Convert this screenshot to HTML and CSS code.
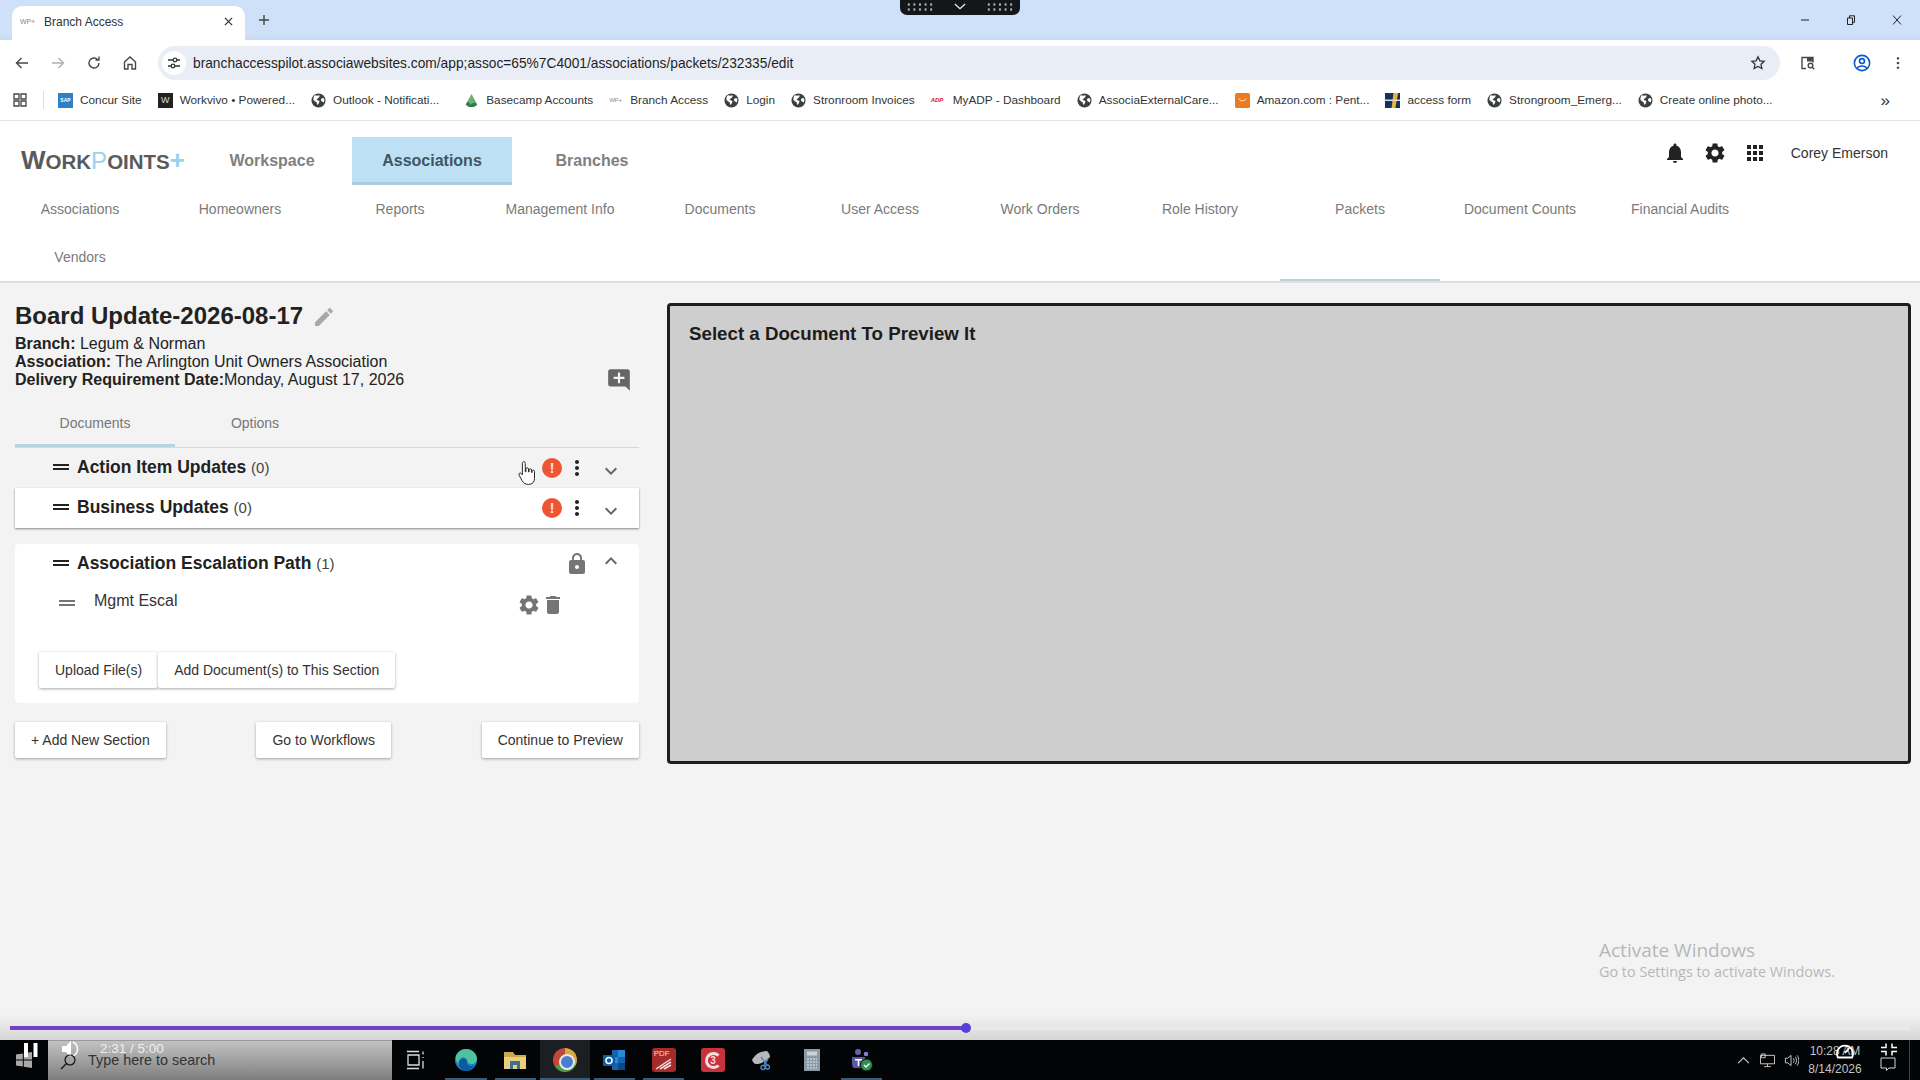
FILE: index.html
```html
<!DOCTYPE html>
<html lang="en">
<head>
    <meta charset="UTF-8">
    <title>Branch Access</title>
    <link rel="stylesheet" href="styles.css">
</head>
<body>
    <svg class="sprite" xmlns="http://www.w3.org/2000/svg">
        <symbol id="i-bell" viewBox="0 0 24 24"><path d="M12 22c1.1 0 2-.9 2-2h-4c0 1.1.89 2 2 2zm6-6v-5c0-3.07-1.64-5.64-4.5-6.32V4c0-.83-.67-1.5-1.5-1.5s-1.5.67-1.5 1.5v.68C7.63 5.36 6 7.92 6 11v5l-2 2v1h16v-1l-2-2z"/></symbol>
        <symbol id="i-gear" viewBox="0 0 24 24"><path d="M19.14 12.94c.04-.3.06-.61.06-.94 0-.32-.02-.64-.07-.94l2.03-1.58c.18-.14.23-.41.12-.61l-1.92-3.32c-.12-.22-.37-.29-.59-.22l-2.39.96c-.5-.38-1.03-.7-1.62-.94l-.36-2.54c-.04-.24-.24-.41-.48-.41h-3.84c-.24 0-.43.17-.47.41l-.36 2.54c-.59.24-1.13.57-1.62.94l-2.39-.96c-.22-.08-.47 0-.59.22L2.74 8.87c-.12.21-.08.47.12.61l2.03 1.58c-.05.3-.09.63-.09.94s.02.64.07.94l-2.03 1.58c-.18.14-.23.41-.12.61l1.92 3.32c.12.22.37.29.59.22l2.39-.96c.5.38 1.03.7 1.62.94l.36 2.54c.05.24.24.41.48.41h3.84c.24 0 .44-.17.47-.41l.36-2.54c.59-.24 1.13-.56 1.62-.94l2.39.96c.22.08.47 0 .59-.22l1.92-3.32c.12-.22.07-.47-.12-.61l-2.01-1.58zM12 15.6c-1.98 0-3.6-1.62-3.6-3.6s1.62-3.6 3.6-3.6 3.6 1.62 3.6 3.6-1.62 3.6-3.6 3.6z"/></symbol>
        <symbol id="i-apps" viewBox="0 0 24 24"><path d="M4 8h4V4H4v4zm6 12h4v-4h-4v4zm-6 0h4v-4H4v4zm0-6h4v-4H4v4zm6 0h4v-4h-4v4zm6-10v4h4V4h-4zm-6 4h4V4h-4v4zm6 6h4v-4h-4v4zm0 6h4v-4h-4v4z"/></symbol>
        <symbol id="i-edit" viewBox="0 0 24 24"><path d="M3 17.25V21h3.75L17.81 9.94l-3.75-3.75L3 17.25zM20.71 7.04c.39-.39.39-1.02 0-1.41l-2.34-2.34c-.39-.39-1.02-.39-1.41 0l-1.83 1.83 3.75 3.75 1.83-1.83z"/></symbol>
        <symbol id="i-comment" viewBox="0 0 24 24"><path d="M21.99 4c0-1.1-.89-2-1.99-2H4c-1.1 0-2 .9-2 2v12c0 1.1.9 2 2 2h14l4 4-.01-18zM17 11h-4v4h-2v-4H7V9h4V5h2v4h4v2z"/></symbol>
        <symbol id="i-drag" viewBox="0 0 24 24"><path d="M20 9H4v2h16V9zM4 15h16v-2H4v2z"/></symbol>
        <symbol id="i-more" viewBox="0 0 24 24"><path d="M12 8c1.1 0 2-.9 2-2s-.9-2-2-2-2 .9-2 2 .9 2 2 2zm0 2c-1.1 0-2 .9-2 2s.9 2 2 2 2-.9 2-2-.9-2-2-2zm0 6c-1.1 0-2 .9-2 2s.9 2 2 2 2-.9 2-2-.9-2-2-2z"/></symbol>
        <symbol id="i-down" viewBox="0 0 24 24"><path d="M16.59 8.59L12 13.17 7.41 8.59 6 10l6 6 6-6z"/></symbol>
        <symbol id="i-up" viewBox="0 0 24 24"><path d="M12 8l-6 6 1.41 1.41L12 10.83l4.59 4.58L18 14z"/></symbol>
        <symbol id="i-lock" viewBox="0 0 24 24"><path d="M18 8h-1V6c0-2.76-2.24-5-5-5S7 3.24 7 6v2H6c-1.1 0-2 .9-2 2v10c0 1.1.9 2 2 2h12c1.1 0 2-.9 2-2V10c0-1.1-.9-2-2-2zm-6 9c-1.1 0-2-.9-2-2s.9-2 2-2 2 .9 2 2-.9 2-2 2zm3.1-9H8.9V6c0-1.71 1.39-3.1 3.1-3.1 1.71 0 3.1 1.39 3.1 3.1v2z"/></symbol>
        <symbol id="i-trash" viewBox="0 0 24 24"><path d="M6 19c0 1.1.9 2 2 2h8c1.1 0 2-.9 2-2V7H6v12zM19 4h-3.5l-1-1h-5l-1 1H5v2h14V4z"/></symbol>
        <symbol id="i-globe" viewBox="0 0 16 16"><circle cx="8" cy="8" r="7.5" fill="#3c4043"/><path fill="#fff" d="M4.5 2.5c1.5.6 3 .3 4.5 0 .6 1 0 2-1 2.5-.5 1-1.500 1-2 2 .2 1 1.500.8 2.500 1.200.8.5.5 1.500 0 2.300-.4 1-.8 1.800-1.500 2.300-.6-1-.8-2-1-3-1.200-.5-2.600-1.500-3.500-3 0-1.800.6-3.200 1.500-4.300zM11 6c1-.5 2-.5 3-.2.400 1.500.200 3-.5 4.400-.8-.6-1.500-1.400-2.500-1.700-.5-.9-.5-1.700 0-2.500z"/></symbol>
    </svg>

    <!-- Browser -->
    <div class="tabstrip">
        <div class="tab">
            <span class="wp-fav">WP+</span>
            <span class="tab-title">Branch Access</span>
            <svg class="tab-close" viewBox="0 0 10 10"><path d="M1 1l8 8M9 1l-8 8"/></svg>
        </div>
        <svg class="tab-plus" viewBox="0 0 12 12"><path d="M6 1v10M1 6h10"/></svg>
        <div class="win-controls">
            <span class="win-btn"><svg viewBox="0 0 10 10"><path d="M1 5h8"/></svg></span>
            <span class="win-btn"><svg viewBox="0 0 10 10"><path d="M1.500 3h5v6.500h-5zM3.500 3V.8h5v6.500H6.500"/></svg></span>
            <span class="win-btn"><svg viewBox="0 0 10 10"><path d="M1 .5l8 9M9 .5l-8 9"/></svg></span>
        </div>
    </div>
    <div class="toolbar">
        <span class="tool-btn"><svg viewBox="0 0 16 16"><path d="M14 8H3M7.500 3L2.500 8l5 5"/></svg></span>
        <span class="tool-btn muted"><svg viewBox="0 0 16 16"><path d="M2 8h11M8.500 3l5 5-5 5"/></svg></span>
        <span class="tool-btn"><svg viewBox="0 0 16 16"><path d="M13 8a5 5 0 1 1-1.500-3.600M13 1.500v3.500H9.500"/></svg></span>
        <span class="tool-btn"><svg viewBox="0 0 16 16"><path d="M2.500 7L8 2l5.500 5v7H10V9.500H6V14H2.500z"/></svg></span>
        <div class="omnibox">
            <span class="site-info"><svg viewBox="0 0 14 14"><path d="M1 4h5M10 4h3M1 10h3M8 10h5"/><circle cx="8" cy="4" r="1.800"/><circle cx="6" cy="10" r="1.800"/></svg></span>
            <span class="url">branchaccesspilot.associawebsites.com/app;assoc=65%7C4001/associations/packets/232335/edit</span>
            <svg class="star" viewBox="0 0 16 16"><path d="M8 1.800l1.900 4 4.300.5-3.200 3 .9 4.300L8 11.500l-3.900 2.100.9-4.300-3.200-3 4.300-.5z"/></svg>
        </div>
        <span class="tool-btn wide"><svg viewBox="0 0 16 16"><path d="M6 13.500H2v-11h11v5"/><path class="solid" d="M7 2.500h6v4H7z"/><circle cx="10.500" cy="10.500" r="2.300"/><path d="M12.200 12.200l2 2"/></svg></span>
        <span class="tool-sep"></span>
        <span class="tool-btn"><svg class="blue" viewBox="0 0 16 16"><circle cx="8" cy="8" r="6.800"/><circle cx="8" cy="6.300" r="2.200"/><path d="M4 12.500c1-2.500 7-2.500 8 0"/></svg></span>
        <span class="tool-btn"><svg viewBox="0 0 16 16"><path class="solid" d="M8 2a1.300 1.300 0 1 0 .01 0zM8 6.700a1.300 1.300 0 1 0 .01 0zM8 11.400a1.300 1.300 0 1 0 .01 0z"/></svg></span>
    </div>
    <div class="bookmarks">
        <svg class="bm-grid" viewBox="0 0 14 14"><path d="M1 1h5v5H1zM8 1h5v5H8zM1 8h5v5H1zM8 8h5v5H8z"/></svg>
        <span class="bm-sep"></span>
        <span class="bm"><span class="fav fav-sap">SAP</span>Concur Site</span>
        <span class="bm"><span class="fav fav-vivo">W</span>Workvivo • Powered...</span>
        <span class="bm bm-wide"><svg class="fav"><use href="#i-globe"/></svg>Outlook - Notificati...</span>
        <span class="bm"><svg class="fav" viewBox="0 0 16 16"><path fill="#6fae7a" d="M8 1l6 11c-1 2-3 3-6 3s-5-1-6-3z"/><path fill="#2f7d4f" d="M2 12c2-3 3-3 4-1s2 1 3 0 3-1 5 1c-1 2-3 3-6 3s-5-1-6-3z"/></svg>Basecamp Accounts</span>
        <span class="bm"><span class="fav wp-fav">WP+</span>Branch Access</span>
        <span class="bm"><svg class="fav"><use href="#i-globe"/></svg>Login</span>
        <span class="bm"><svg class="fav"><use href="#i-globe"/></svg>Stronroom Invoices</span>
        <span class="bm"><span class="fav fav-adp">ADP</span>MyADP - Dashboard</span>
        <span class="bm"><svg class="fav"><use href="#i-globe"/></svg>AssociaExternalCare...</span>
        <span class="bm"><svg class="fav" viewBox="0 0 16 16"><rect width="16" height="16" rx="2" fill="#ee7a20"/><path d="M4 6c2 3 6 3 8 0" fill="none" stroke="#fff"/></svg>Amazon.com : Pent...</span>
        <span class="bm"><svg class="fav" viewBox="0 0 16 16"><path fill="#16305f" d="M0 0h16v16H0z"/><path fill="#f0b232" d="M9 0h5l-3 16H7z"/><path fill="#dfe6f2" d="M0 7h16v1.500H0z"/></svg>access form</span>
        <span class="bm"><svg class="fav"><use href="#i-globe"/></svg>Strongroom_Emerg...</span>
        <span class="bm"><svg class="fav"><use href="#i-globe"/></svg>Create online photo...</span>
        <span class="bm-more">»</span>
    </div>

    <!-- App -->
    <header class="app-header">
        <div class="top-row">
            <div class="logo">WORK<span class="blue">P</span>OINTS<span class="plus">+</span></div>
            <nav class="main-nav">
                <a>Workspace</a>
                <a class="active">Associations</a>
                <a>Branches</a>
            </nav>
            <div class="user-area">
                <svg class="icon"><use href="#i-bell"/></svg>
                <svg class="icon"><use href="#i-gear"/></svg>
                <svg class="icon"><use href="#i-apps"/></svg>
                <span class="user-name">Corey Emerson</span>
            </div>
        </div>
        <nav class="sub-nav">
            <a>Associations</a>
            <a>Homeowners</a>
            <a>Reports</a>
            <a>Management Info</a>
            <a>Documents</a>
            <a>User Access</a>
            <a>Work Orders</a>
            <a>Role History</a>
            <a class="active">Packets</a>
            <a>Document Counts</a>
            <a>Financial Audits</a>
            <a>Vendors</a>
        </nav>
    </header>

    <main class="content">
        <section class="packet">
            <h1 class="packet-title">Board Update-2026-08-17<svg class="icon edit"><use href="#i-edit"/></svg></h1>
            <div class="packet-info">
                <div>
                    <div><b>Branch:</b> Legum &amp; Norman</div>
                    <div><b>Association:</b> The Arlington Unit Owners Association</div>
                    <div><b>Delivery Requirement Date:</b>Monday, August 17, 2026</div>
                </div>
                <svg class="add-note"><use href="#i-comment"/></svg>
            </div>

            <div class="tabs">
                <a class="active">Documents</a>
                <a>Options</a>
            </div>

            <div class="sec-row">
                <svg class="icon"><use href="#i-drag"/></svg>
                <h2>Action Item Updates <small>(0)</small></h2>
                <div class="sec-tools">
                    <span class="alert">!</span>
                    <svg class="icon"><use href="#i-more"/></svg>
                    <svg class="icon chev"><use href="#i-down"/></svg>
                </div>
            </div>
            <div class="sec-row white">
                <svg class="icon"><use href="#i-drag"/></svg>
                <h2>Business Updates <small>(0)</small></h2>
                <div class="sec-tools">
                    <span class="alert">!</span>
                    <svg class="icon"><use href="#i-more"/></svg>
                    <svg class="icon chev"><use href="#i-down"/></svg>
                </div>
            </div>

            <div class="sec-card">
                <div class="sec-row">
                    <svg class="icon"><use href="#i-drag"/></svg>
                    <h2>Association Escalation Path <small>(1)</small></h2>
                    <div class="sec-tools">
                        <svg class="icon grey"><use href="#i-lock"/></svg>
                        <svg class="icon chev up"><use href="#i-up"/></svg>
                    </div>
                </div>
                <div class="doc-row">
                    <svg class="icon grey"><use href="#i-drag"/></svg>
                    <span class="doc-name">Mgmt Escal</span>
                    <div class="doc-tools">
                        <svg class="icon grey"><use href="#i-gear"/></svg>
                        <svg class="icon grey"><use href="#i-trash"/></svg>
                    </div>
                </div>
                <div class="card-btns">
                    <button>Upload File(s)</button>
                    <button>Add Document(s) to This Section</button>
                </div>
            </div>

            <div class="page-btns">
                <button>+ Add New Section</button>
                <button>Go to Workflows</button>
                <button>Continue to Preview</button>
            </div>

            <svg class="hand" viewBox="0 0 18 24"><path d="M5 1.500c1 0 1.500.7 1.500 1.600V11l.6-.1V8.400c0-1.600 2.400-1.600 2.400 0V11l.5 0V9.200c0-1.500 2.300-1.500 2.300 0v2.300l.5 0v-1c0-1.400 2.200-1.400 2.200 0V17c0 3.500-2 5.500-5.500 5.500-3 0-4.500-1-6-3.500L.8 14c-.9-1.500 1-2.700 2-1.500l1 1.300V3.100C3.800 2.200 4.200 1.500 5 1.500z"/></svg>
        </section>

        <section class="preview">
            <h3>Select a Document To Preview It</h3>
        </section>
    </main>

    <!-- Overlays from the recording -->
    <div class="rec-pill">
        <span class="dots"></span>
        <svg viewBox="0 0 14 8"><path d="M1 1l6 5.500L13 1"/></svg>
        <span class="dots"></span>
    </div>
    <div class="activate">
        <div class="activate-big">Activate Windows</div>
        <div>Go to Settings to activate Windows.</div>
    </div>
    <div class="player-fade">
        <div class="player-track"><div class="player-fill"></div></div>
    </div>

    <!-- Taskbar -->
    <footer class="taskbar">
        <div class="start">
            <svg viewBox="0 0 16 16"><path d="M0 2.500l6.800-1v6H0zM7.800 1.300L16 0v7.500H7.800zM0 8.500h6.800v6l-6.800-1zM7.800 8.500H16V16l-8.200-1.300z"/></svg>
        </div>
        <div class="search">Type here to search</div>
        <div class="task-icons">
            <span class="task first"><svg viewBox="0 0 24 24" fill="none" stroke="#ddd" stroke-width="1.300"><path d="M5 7h11v10H5zM4 3.500h12M4 20.500h12M20 3.500v3M20 9v1M20 13v7.500"/></svg></span>
            <span class="task open"><svg viewBox="0 0 24 24"><circle cx="12" cy="12" r="11" fill="#1680c8"/><path fill="#4fc3a0" d="M12 1c6 0 11 4.500 11 10 0 3-2.500 5-6 5-2 0-3.500-1-3.500-2.500 0-2-3-5-6-3.500C5 11.500 4 14 5 17 2.500 14 1 11 2 8c1.500-4 5.500-7 10-7z"/><path fill="#0d5a9e" d="M5 17c-1-4 2-7 5-6.500 2.500.5 3.500 3.500 3 5 1 3 4.500 3 7 2-2 3.500-5 5.500-8 5.500-3 0-6-2-7-6z"/></svg></span>
            <span class="task open"><svg viewBox="0 0 24 24"><path fill="#c9a84e" d="M1 4h9l2 3h11v14H1z"/><path fill="#e9cf7c" d="M1 9h22v12H1z"/><path fill="#3f6f92" d="M7 13h10v8h-3v-4h-4v4H7z"/></svg></span>
            <span class="task open current"><span class="chrome"></span></span>
            <span class="task open"><svg viewBox="0 0 24 24"><path fill="#1464b4" d="M10 2h13v20H10z"/><path fill="#2a8ad4" d="M16 2h7v7h-7zM10 9h6v6h-6z"/><path fill="#0a4a8a" d="M16 15h7v7h-7z"/><rect x="1" y="7" width="12" height="11" fill="#0d5ca8"/><circle cx="7" cy="12.500" r="3" fill="none" stroke="#fff" stroke-width="1.600"/></svg></span>
            <span class="task open"><span class="pdf">PDF<svg viewBox="0 0 20 12"><path d="M2 11L17 1M6 11l11-7M10 11l7-4" fill="none" stroke="#f5dcdc" stroke-width="1.500"/></svg></span></span>
            <span class="task"><span class="cthree"><span class="cring">3</span></span></span>
            <span class="task"><svg viewBox="0 0 24 24"><path fill="#b8b8b8" d="M2 12C5 6 11 3 17 3c2 2 3 4 3 6-4 4-9 7-14 7-2 0-3-2-4-4z"/><path fill="none" stroke="#4a8ac4" stroke-width="1.400" d="M11 9l6 8M18 11l-4 6"/><circle cx="17.500" cy="19" r="2" fill="none" stroke="#4a8ac4" stroke-width="1.400"/><circle cx="13" cy="19.500" r="2" fill="none" stroke="#4a8ac4" stroke-width="1.400"/></svg></span>
            <span class="task"><svg viewBox="0 0 24 24"><rect x="4" y="1" width="16" height="22" fill="#8a9ba6"/><rect x="7" y="3.500" width="10" height="4" fill="#c8d4da"/><path stroke="#c8d4da" stroke-width="1.600" stroke-dasharray="2 1" d="M7 11h10M7 14h10M7 17h10M7 20h10"/></svg></span>
            <span class="task open"><svg viewBox="0 0 24 24"><circle cx="9" cy="4" r="3" fill="#6264a7"/><circle cx="17" cy="6" r="2.300" fill="#7b83c9"/><path fill="#5558a8" d="M3 9h13v11H5c-1 0-2-2-2-4z"/><path fill="#fff" d="M6 11h7v1.500h-2.700V18H8.700v-5.500H6z"/><circle cx="17.500" cy="17" r="6" fill="#2d8f4e" stroke="#111"/><path fill="none" stroke="#fff" stroke-width="1.400" d="M15 17l2 2 3.500-3.500"/></svg></span>
        </div>
        <div class="tray">
            <span class="tray-slot"><svg viewBox="0 0 14 14"><path d="M2 9.500l5-5 5 5"/></svg></span>
            <span class="tray-slot"><svg viewBox="0 0 16 16"><path d="M.5 2.500h15v9H.5zM8 11.500v3M4.500 14.500h7M1.500 1h4v4h-4z"/></svg></span>
            <span class="tray-slot"><svg viewBox="0 0 16 16"><path d="M1.500 5.500H4L7.500 2.500v11L4 10.500H1.500zM10 5.500c1 1.500 1 3.500 0 5M12 4c1.800 2.500 1.800 5.500 0 8M14 2.500c2.400 3.500 2.400 7.500 0 11"/></svg></span>
            <div class="clock"><div>10:28 AM</div><div>8/14/2026</div></div>
            <span class="tray-note"><svg viewBox="0 0 16 16"><path d="M1 2h14v10H9l-2.500 2.500V12H1z"/></svg></span>
            <span class="show-desktop"></span>
        </div>
        <div class="player-left">
            <svg class="pause" viewBox="0 0 14 14"><path d="M0 0h4v14H0zM9.500 0h4v14h-4z"/></svg>
            <svg class="volume" viewBox="0 0 18 16"><path d="M0 5h4l5-5v16l-5-5H0z"/><path fill="none" stroke="#fff" stroke-width="1.500" d="M11 1c6 3 6 11 0 14"/></svg>
            <svg class="loupe" viewBox="0 0 16 16"><circle cx="10" cy="6" r="5"/><path d="M6.500 9.500L1 15"/></svg>
            <span class="player-time">2:31 / 5:00</span>
        </div>
        <svg class="gauge" viewBox="0 0 20 16"><path d="M3 14.500a8 8 0 1 1 14 0zM10 10l5-6"/></svg>
        <svg class="fs-exit" viewBox="0 0 16 12"><path d="M5 0v4H0M11 0v4h5M0 8h5v4M16 8h-5v4"/></svg>
    </footer>
</body>
</html>
```

FILE: styles.css
```css
/* General */
* {
    box-sizing: border-box;
}

html, body {
    margin: 0;
    height: 1080px;
    overflow: hidden;
}

body {
    position: relative;
    display: flex;
    flex-direction: column;
    font-family: "Liberation Sans", Arial, sans-serif;
    font-size: 14px;
    color: #222;
    background-color: #f3f3f3;
}

.sprite {
    display: none;
}

.icon {
    display: block;
    flex: none;
    width: 24px;
    height: 24px;
    fill: currentColor;
}

.grey {
    color: #757575;
}

/* Browser tabs */
.tabstrip {
    display: flex;
    align-items: flex-end;
    height: 40px;
    padding-left: 12px;
    background: linear-gradient(#cfe0f9 80%, #c9daf3);
}

.tab {
    display: flex;
    align-items: center;
    width: 233px;
    height: 34px;
    padding: 0 10px 3px 8px;
    background: #fff;
    border-radius: 10px 10px 0 0;
    font-size: 12px;
    color: #333;
}

.wp-fav {
    flex: none;
    width: 24px;
    font-size: 7px;
    letter-spacing: -.2px;
    color: #8a8a8a;
}

.tab-title {
    flex: 1;
}

.tab-close {
    width: 9px;
    height: 9px;
    margin-right: 2px;
    stroke: #333;
    stroke-width: 1.4;
}

.tab-plus {
    width: 12px;
    height: 12px;
    margin: 0 0 14px 13px;
    stroke: #444;
    stroke-width: 1.400;
}

.win-controls {
    display: flex;
    margin-left: auto;
    align-self: stretch;
}

.win-btn {
    display: flex;
    align-items: center;
    justify-content: center;
    width: 46px;
}

.win-btn svg {
    width: 10px;
    height: 10px;
    fill: none;
    stroke: #222;
}

/* Browser toolbar */
.toolbar {
    display: flex;
    align-items: center;
    height: 40px;
    padding: 6px 4px 0;
    background: #fff;
}

.tool-btn {
    display: flex;
    align-items: center;
    justify-content: center;
    flex: none;
    width: 36px;
    height: 32px;
}

.tool-btn svg {
    width: 16px;
    height: 16px;
    fill: none;
    stroke: #474747;
    stroke-width: 1.400;
}

.tool-btn.muted svg {
    stroke: #b0b0b0;
}

.tool-btn svg.blue {
    stroke: #0b57d0;
    width: 18px;
    height: 18px;
}

.tool-btn .solid {
    fill: #474747;
    stroke: none;
}

.tool-btn.wide {
    width: 56px;
}

.tool-sep {
    width: 1px;
    height: 20px;
    margin: 0 8px 0 0;
    background: #dcdcdc;
}

.omnibox {
    display: flex;
    align-items: center;
    flex: none;
    width: 1622px;
    height: 34px;
    margin-left: 10px;
    padding: 0 14px 0 4px;
    background: #e9eef6;
    border-radius: 17px;
    font-size: 13.750px;
    color: #1f1f1f;
}

.site-info {
    display: flex;
    align-items: center;
    justify-content: center;
    width: 24px;
    height: 24px;
    background: #fff;
    border-radius: 50%;
}

.site-info svg {
    width: 14px;
    height: 14px;
    fill: none;
    stroke: #333;
    stroke-width: 1.300;
}

.url {
    flex: 1;
    margin-left: 7px;
}

.star {
    width: 16px;
    height: 16px;
    fill: none;
    stroke: #333;
    stroke-width: 1.300;
}

/* Bookmarks */
.bookmarks {
    display: flex;
    align-items: center;
    height: 40px;
    padding-left: 13px;
    background: #fff;
    font-size: 11.800px;
    color: #333;
    white-space: nowrap;
}

.bm-grid {
    width: 14px;
    height: 14px;
    fill: none;
    stroke: #444;
    stroke-width: 1.300;
}

.bm-sep {
    width: 1px;
    height: 18px;
    margin: 0 14px 0 16px;
    background: #ddd;
}

.bm {
    display: flex;
    align-items: center;
    margin-right: 16px;
}

.bm-wide {
    margin-right: 25px;
}

.fav {
    flex: none;
    width: 15px;
    height: 15px;
    margin-right: 7px;
}

.fav.wp-fav {
    width: 15px;
    margin-right: 6px;
    font-size: 6px;
    line-height: 15px;
}

.fav-sap {
    background: #2f7fc4;
    color: #fff;
    font-size: 5px;
    font-weight: bold;
    line-height: 15px;
    text-align: center;
}

.fav-vivo {
    background: #222;
    color: #ddd;
    font-size: 9px;
    line-height: 15px;
    text-align: center;
}

.fav-adp {
    color: #d0202e;
    font-size: 6px;
    font-weight: bold;
    font-style: italic;
    line-height: 15px;
}

.bm-more {
    margin-left: auto;
    margin-right: 30px;
    font-size: 17px;
    line-height: 1;
}

/* App header */
.app-header {
    background: #fff;
    border-top: 1px solid #e3e3e3;
    border-bottom: 2px solid #dfdfdf;
}

.top-row {
    display: flex;
    height: 64px;
}

.logo {
    flex: none;
    width: 192px;
    padding: 24px 0 0 21px;
    font-size: 20.500px;
    font-weight: bold;
    line-height: 30px;
    color: #5a5a5a;
    white-space: nowrap;
}

.logo::first-letter {
    font-size: 26px;
}

.logo .blue {
    font-size: 24px;
    font-weight: normal;
    color: #9dd0ee;
}

.logo .plus {
    font-size: 26px;
    color: #9dd0ee;
}

.main-nav {
    display: flex;
    align-items: flex-end;
}

.main-nav a {
    display: flex;
    align-items: center;
    justify-content: center;
    width: 160px;
    height: 48px;
    font-size: 16px;
    font-weight: bold;
    color: #808080;
}

.main-nav a.active {
    padding-top: 3px;
    background: #bee0f4;
    border-bottom: 3px solid #a8cde3;
    color: #3d5663;
}

.user-area {
    display: flex;
    align-items: center;
    gap: 16px;
    margin-left: auto;
    padding: 0 32px 0 0;
    color: #222;
}

.user-name {
    margin-left: 8px;
    color: #333;
}

.sub-nav {
    display: grid;
    grid-template-columns: repeat(11, 160px);
    grid-auto-rows: 48px;
}

.sub-nav a {
    display: flex;
    align-items: center;
    justify-content: center;
    color: #7a7a7a;
}

/* the underline of the open page sits on the bottom edge of the header */
.sub-nav a.active {
    grid-row: span 2;
    align-items: flex-start;
    padding-top: 16px;
    box-shadow: inset 0 -2px 0 #bcd3da;
}

/* Content */
.content {
    display: flex;
    flex: 1;
    align-items: flex-start;
    gap: 28px;
    padding: 20px 9px 0 15px;
}

.packet {
    position: relative;
    flex: none;
    width: 624px;
}

.packet-title {
    display: flex;
    align-items: center;
    gap: 1px;
    height: 28px;
    margin: -1px 0 5px;
    font-size: 24px;
    font-weight: bold;
    white-space: pre;
}

.packet-title .edit {
    margin: 1px 0 0 8px;
    color: #a8a8a8;
}

.packet-info {
    display: flex;
    justify-content: space-between;
    align-items: flex-end;
    padding-right: 7px;
    font-size: 16px;
    line-height: 18.200px;
}

.add-note {
    width: 26px;
    height: 26px;
    fill: #666;
    margin-bottom: -3px;
}

.tabs {
    display: flex;
    height: 58px;
    padding-top: 9px;
    border-bottom: 1px solid #d8d8d8;
}

.tabs a {
    display: flex;
    align-items: center;
    justify-content: center;
    width: 160px;
    height: 48px;
    margin-bottom: -1px;
    color: #777;
}

.tabs a.active {
    padding-top: 3px;
    border-bottom: 3px solid #b7d5e0;
}

/* Sections */
.sec-row {
    display: flex;
    align-items: center;
    height: 40px;
    padding: 0 16px 0 34px;
}

.sec-row > .icon {
    margin-bottom: 1px;
}

.sec-row h2 {
    margin: 0 0 1px 4px;
    font-size: 17.500px;
    font-weight: bold;
}

.sec-row h2 small {
    font-size: 15px;
    font-weight: normal;
    color: #444;
}

.sec-row.white {
    background: #fff;
    box-shadow: 0 1px 2px rgba(0, 0, 0, .45);
}

.sec-tools {
    display: flex;
    align-items: center;
    gap: 2px;
    margin-left: auto;
}

.alert {
    width: 20px;
    height: 20px;
    margin: 0 1px 0 0;
    border-radius: 50%;
    background: #ee5533;
    color: #fbe6df;
    font-size: 14px;
    font-weight: bold;
    line-height: 20px;
    text-align: center;
}

.chev {
    margin: 6px 0 0 8px;
    color: #666;
}

.chev.up {
    margin-top: -6px;
}

.sec-card {
    margin-top: 16px;
    padding-bottom: 15px;
    background: #fff;
    border-radius: 4px;
}

.doc-row {
    display: flex;
    align-items: flex-start;
    height: 68px;
    padding: 8px 0 0 40px;
}

.doc-row > .icon {
    margin-top: -1px;
}

.doc-name {
    font-size: 16px;
    margin-left: 15px;
    color: #333;
}

.doc-tools {
    display: flex;
    margin: 1px 0 0 auto;
    padding-right: 74px;
}

button {
    height: 36px;
    padding: 0 16px;
    border: none;
    border-radius: 2px;
    background: #fff;
    box-shadow: 0 1px 3px rgba(0, 0, 0, .35);
    font-family: inherit;
    font-size: 14px;
    color: #333;
}

.card-btns {
    display: flex;
    padding-left: 24px;
}

.page-btns {
    display: flex;
    justify-content: space-between;
    margin-top: 19px;
}

.hand {
    position: absolute;
    left: 503px;
    top: 157px;
    width: 20px;
    height: 26px;
    fill: #fff;
    stroke: #222;
    stroke-width: .9;
}

/* Preview */
.preview {
    flex: 1;
    height: 461px;
    padding: 17px 19px;
    background: #cecece;
    border: 3px solid #1e1e1e;
    border-radius: 4px;
}

.preview h3 {
    margin: 0;
    font-size: 18.720px;
    color: #1c1c1c;
}

/* Recording overlays */
.rec-pill {
    position: absolute;
    top: 0;
    left: 900px;
    display: flex;
    align-items: center;
    justify-content: space-between;
    width: 120px;
    height: 15px;
    padding: 0 6px 2px;
    background: #14171a;
    border-radius: 0 0 7px 7px;
}

.rec-pill svg {
    width: 12px;
    height: 7px;
    fill: none;
    stroke: #eee;
    stroke-width: 1.500;
}

.dots {
    width: 28px;
    height: 10px;
    background: radial-gradient(circle, #b5b5b5 1px, transparent 1.300px) 0 0 / 5.600px 5px;
}

.activate {
    position: absolute;
    left: 1599px;
    top: 938px;
    font-family: "Open Sans", sans-serif;
    font-size: 14.400px;
    line-height: 20px;
    color: #b7b7b7;
}

.activate-big {
    font-size: 19px;
    line-height: 24px;
}

.player-fade {
    position: absolute;
    left: 0;
    right: 0;
    bottom: 40px;
    height: 26px;
    padding: 12px 10px 0;
    background: linear-gradient(rgba(215, 215, 215, 0), #d6d6d6);
}

.player-track {
    height: 4px;
    background: #e9e9e9;
}

.player-fill {
    position: relative;
    width: 956px;
    height: 4px;
    background: #6f42c4;
}

.player-fill::after {
    content: "";
    position: absolute;
    right: -5px;
    top: -3px;
    width: 10px;
    height: 10px;
    border-radius: 50%;
    background: #5a3fd6;
}

/* Taskbar */
.taskbar {
    position: relative;
    display: flex;
    flex: none;
    height: 40px;
    background: #030405;
}

.start {
    display: flex;
    align-items: flex-end;
    flex: none;
    width: 48px;
    padding: 0 0 12px 16px;
}

.start svg {
    width: 16px;
    height: 16px;
    fill: #a9a9a9;
}

.search {
    flex: none;
    width: 344px;
    padding: 11px 0 0 40px;
    background: linear-gradient(#c2c2c2, #7e7e7e);
    border-top: 1px solid #999;
    font-size: 14.400px;
    color: #333;
}

.task-icons {
    display: flex;
}

.task {
    position: relative;
    display: flex;
    align-items: center;
    justify-content: center;
    width: 49.400px;
}

.task svg {
    width: 24px;
    height: 24px;
}

.task.first svg {
    margin-right: 3px;
}

.task.open::after {
    content: "";
    position: absolute;
    left: 4px;
    right: 4px;
    bottom: 0;
    height: 2px;
    background: #3b5a78;
}

.task.current {
    background: #1c1f21;
}

.task.current::after {
    left: 0;
    right: 0;
}

.chrome {
    position: relative;
    width: 24px;
    height: 24px;
    border-radius: 50%;
    background: conic-gradient(#d9a93c 0 115deg, #4f9a4a 115deg 235deg, #c0483a 235deg 360deg);
}

.chrome::after {
    content: "";
    position: absolute;
    left: 6px;
    top: 6px;
    width: 12px;
    height: 12px;
    border-radius: 50%;
    background: #4a7fd0;
    border: 2px solid #e8e8e8;
}

.pdf {
    width: 24px;
    height: 24px;
    padding: 2px 0 0 2px;
    background: #a52a2a;
    border-radius: 3px;
    font-size: 8px;
    line-height: 8px;
    color: #f0d8d8;
}

.pdf svg {
    display: block;
    width: 20px;
    height: 12px;
}

.cthree {
    display: flex;
    align-items: center;
    justify-content: center;
    width: 24px;
    height: 24px;
    background: #c8323c;
    border-radius: 3px;
}

.cring {
    width: 17px;
    height: 17px;
    border: 3px solid #f2dcdc;
    border-right-color: transparent;
    border-radius: 50%;
    font-size: 10px;
    font-weight: bold;
    line-height: 11px;
    text-align: center;
    color: #f2dcdc;
}

.tray {
    display: flex;
    align-items: center;
    margin-left: auto;
}

.tray-slot {
    display: flex;
    justify-content: center;
    width: 24px;
}

.tray-slot svg {
    width: 15px;
    height: 15px;
    fill: none;
    stroke: #cfcfcf;
}

.clock {
    width: 64px;
    font-size: 12px;
    line-height: 18px;
    text-align: center;
    color: #c4c4c4;
}

.tray-note {
    display: flex;
    justify-content: center;
    width: 42px;
    padding-top: 8px;
}

.tray-note svg {
    width: 16px;
    height: 16px;
    fill: none;
    stroke: #d5d5d5;
}

.show-desktop {
    width: 11px;
    height: 40px;
    border-left: 1px solid #444;
    margin-left: 0;
}

.player-left {
    position: absolute;
    left: 0;
    top: 0;
}

.pause {
    position: absolute;
    left: 24px;
    top: 3px;
    width: 14px;
    height: 14px;
    fill: #fff;
}

.volume {
    position: absolute;
    left: 62px;
    top: 1px;
    width: 18px;
    height: 16px;
    fill: #fff;
}

.loupe {
    position: absolute;
    left: 60px;
    top: 14px;
    width: 16px;
    height: 16px;
    fill: none;
    stroke: #111;
    stroke-width: 1.200;
}

.player-time {
    position: absolute;
    left: 100px;
    top: 1px;
    font-size: 13.500px;
    line-height: 15px;
    color: #eee;
    white-space: nowrap;
}

.gauge {
    position: absolute;
    left: 1835px;
    top: 3px;
    width: 20px;
    height: 16px;
    fill: none;
    stroke: #fff;
    stroke-width: 1.800;
}

.fs-exit {
    position: absolute;
    left: 1881px;
    top: 3px;
    width: 16px;
    height: 13px;
    fill: none;
    stroke: #fff;
    stroke-width: 1.500;
}
```
